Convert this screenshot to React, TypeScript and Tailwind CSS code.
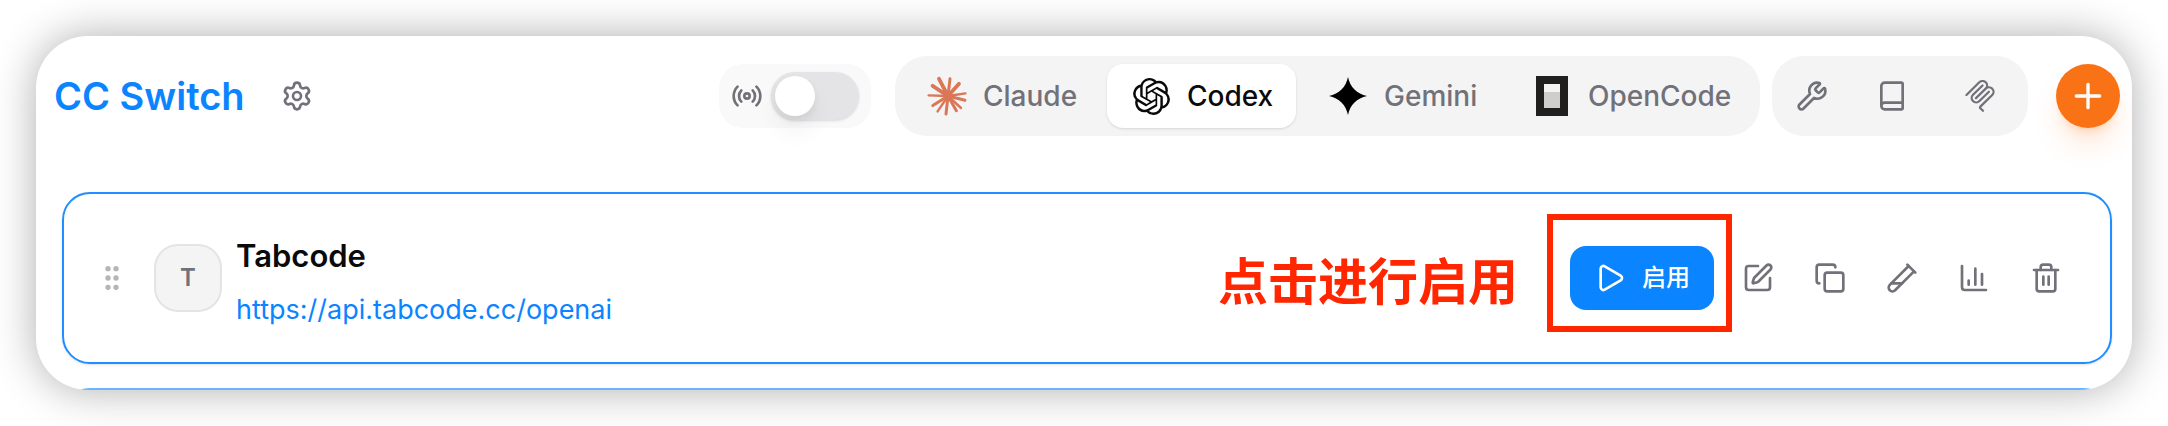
import { useState } from "react";
import {
  ChartColumn,
  Copy,
  GripVertical,
  Book,
  Play,
  Plus,
  Radio,
  Settings,
  SquarePen,
  TestTubeDiagonal,
  Trash2,
  Wrench,
} from "lucide-react";
import { SiOpenai } from "react-icons/si";

type AppId = "claude" | "codex" | "gemini" | "opencode";

const ClaudeIcon = () => (
  <svg viewBox="0 0 40 40" className="size-10" fill="none" stroke="#d97757" strokeLinecap="round">
    <path strokeWidth="3.8" d="M21 20 12 2.8M21 20 32 7.8M21 20 5.6 9.8" />
    <path strokeWidth="3" d="M21 20 23 2.8M21 20 38 24.2M21 20 29.4 34.8M21 20 19 38M21 20 5.8 29.6" />
    <path strokeWidth="2.4" d="M21 20 38.4 17.4M21 20 34 32M21 20 10.6 35.4M21 20 1.6 19.4" />
    <circle cx="21.5" cy="20" r="4" fill="#d97757" />
  </svg>
);

const GeminiIcon = () => (
  <svg viewBox="0 0 40 40" className="size-10" fill="#000">
    <path d="M20 1c2 10 9 17 19 19-10 2-17 9-19 19C18 29 11 22 1 20 11 18 18 11 20 1z" />
  </svg>
);

const OpenCodeIcon = () => (
  <svg viewBox="0 0 40 40" className="size-10" shapeRendering="crispEdges">
    <path d="M4 0h32v40H4z" fill="#211e1e" />
    <path d="M12 8h16v8H12z" fill="#f4f4f4" />
    <path d="M12 16h16v16H12z" fill="#cfcecd" />
  </svg>
);

const McpIcon = () => (
  <svg viewBox="0 0 24 24" className="size-8" fill="currentColor">
    <path d="M15.688 2.343a2.588 2.588 0 00-3.61 0l-9.626 9.44a.863.863 0 01-1.203 0 .823.823 0 010-1.18l9.626-9.44a4.313 4.313 0 016.016 0 4.116 4.116 0 011.204 3.54 4.3 4.3 0 013.609 1.18l.05.05a4.115 4.115 0 010 5.9l-8.706 8.537a.274.274 0 000 .393l1.788 1.754a.823.823 0 010 1.18.863.863 0 01-1.203 0l-1.788-1.753a1.92 1.92 0 010-2.754l8.706-8.538a2.47 2.47 0 000-3.54l-.05-.049a2.588 2.588 0 00-3.607-.003l-7.172 7.034-.002.002-.098.097a.863.863 0 01-1.204 0 .823.823 0 010-1.18l7.273-7.133a2.47 2.47 0 00-.003-3.537z" />
    <path d="M14.485 4.703a.823.823 0 000-1.18.863.863 0 00-1.204 0l-7.119 6.982a4.115 4.115 0 000 5.9 4.314 4.314 0 006.016 0l7.12-6.982a.823.823 0 000-1.18.863.863 0 00-1.204 0l-7.119 6.982a2.588 2.588 0 01-3.61 0 2.47 2.47 0 010-3.54l7.12-6.982z" />
  </svg>
);

const apps = [
  { id: "claude" as AppId, name: "Claude", icon: <ClaudeIcon />, width: "w-[196px]" },
  {
    id: "codex" as AppId,
    name: "Codex",
    icon: <SiOpenai className="size-[37px] text-[#0a0a0a]" />,
    width: "w-[189px]",
  },
  { id: "gemini" as AppId, name: "Gemini", icon: <GeminiIcon />, width: "w-[196px]" },
  { id: "opencode" as AppId, name: "OpenCode", icon: <OpenCodeIcon />, width: "w-[244px]" },
];

const actions = [
  { label: "编辑", icon: SquarePen },
  { label: "复制", icon: Copy },
  { label: "测试", icon: TestTubeDiagonal },
  { label: "用量", icon: ChartColumn },
  { label: "删除", icon: Trash2 },
];

const Header = () => {
  const [activeApp, setActiveApp] = useState<AppId>("codex");
  const [proxy, setProxy] = useState(false);

  return (
    <header className="flex items-center pt-5 pr-3 pl-[18px]">
      <h1 className="text-[38px] leading-[48px] font-semibold whitespace-nowrap text-[#0a84ff]">
        CC Switch
      </h1>
      <button aria-label="设置" className="ml-5 flex size-16 items-center justify-center">
        <Settings className="size-8" />
      </button>

      <label className="ml-auto flex h-16 items-center gap-2 rounded-3xl bg-[#f9f9f9] px-3">
        <Radio className="size-8" />
        <input
          type="checkbox"
          role="switch"
          aria-label="代理"
          checked={proxy}
          onChange={(e) => setProxy(e.target.checked)}
          className="h-12 w-22 appearance-none rounded-full bg-[#e4e4e7] p-1 shadow-sm before:block before:size-10 before:rounded-full before:bg-white before:shadow-[0_16px_24px_rgba(0,0,0,0.05),0_4px_8px_rgba(0,0,0,0.06)] checked:bg-[#0a84ff] checked:before:ml-10"
        />
      </label>

      <nav className="ml-6 flex gap-2 rounded-[32px] bg-[#f4f4f4] p-2">
        {apps.map((app) => (
          <button
            key={app.id}
            onClick={() => setActiveApp(app.id)}
            className={`flex h-16 items-center gap-4 rounded-2xl pl-6 text-[28px] font-medium ${app.width} ${
              activeApp === app.id ? "bg-white text-[#0a0a0a] shadow-sm" : ""
            }`}
          >
            <span className="flex size-10 shrink-0 items-center justify-center">{app.icon}</span>
            {app.name}
          </button>
        ))}
      </nav>

      <div className="ml-3 flex gap-2 rounded-[32px] bg-[#f4f4f4] p-2">
        <button aria-label="Skills" className="flex h-16 w-16 items-center justify-center">
          <Wrench className="size-8" />
        </button>
        <button aria-label="Prompts" className="flex h-16 w-20 items-center justify-center">
          <Book className="size-8" />
        </button>
        <button aria-label="MCP" className="flex h-16 w-20 items-center justify-center">
          <McpIcon />
        </button>
      </div>

      <button
        aria-label="添加"
        className="ml-7 flex size-16 items-center justify-center rounded-full bg-[#f97316] text-white shadow-[0_20px_30px_-6px_rgba(249,115,22,0.2),0_8px_12px_-8px_rgba(249,115,22,0.4)]"
      >
        <Plus className="size-10" />
      </button>
    </header>
  );
};

const ProviderCard = () => (
  <article className="flex h-[172px] items-center rounded-[28px] border-2 border-[#1f8fff] px-8 shadow-sm">
    <button aria-label="拖动" className="text-[#b5b5b9]">
      <GripVertical className="size-8" />
    </button>
    <div className="ml-[26px] flex size-17 items-center justify-center rounded-3xl border-2 border-[#e4e4e7] bg-[#f4f4f4] text-2xl font-semibold">
      T
    </div>
    <div className="ml-[14px] flex flex-col gap-3 pt-2">
      <h2 className="text-[31px] leading-[44px] font-semibold text-[#0a0a0a]">Tabcode</h2>
      <a href="https://api.tabcode.cc/openai" className="text-[27px] leading-[40px] text-[#0a84ff]">
        https://api.tabcode.cc/openai
      </a>
    </div>

    <p className="mr-[52px] ml-auto pt-2 text-[50px] leading-[64px] font-bold text-[#ff2600]">
      点击进行启用
    </p>

    <div className="relative mr-3">
      <button className="flex h-16 items-center gap-4 rounded-2xl bg-[#0a84ff] px-6 text-2xl font-medium text-white">
        <Play className="size-8" />
        启用
      </button>
      <span className="pointer-events-none absolute -top-8 -right-[18px] -bottom-[22px] -left-[23px] border-6 border-[#ff2600]" />
    </div>

    <div className="flex gap-2">
      {actions.map(({ label, icon: Icon }) => (
        <button key={label} aria-label={label} className="flex size-16 items-center justify-center">
          <Icon className="size-8" />
        </button>
      ))}
    </div>
  </article>
);

const App = () => {
  return (
    <div className="bg-white p-9 font-['Inter','Noto_Sans_CJK_SC',sans-serif] text-[#71717a]">
      <main className="overflow-hidden rounded-[52px] bg-white shadow-[0_0_44px_rgba(0,0,0,0.32)]">
        <Header />
        <section className="mt-14 flex flex-col gap-6 pr-5 pl-[26px]">
          <ProviderCard />
          <div className="h-0.5 overflow-hidden">
            <div className="h-[172px] rounded-[28px] border-2 border-[#6ab4ff]" />
          </div>
        </section>
      </main>
    </div>
  );
};

export default App;
